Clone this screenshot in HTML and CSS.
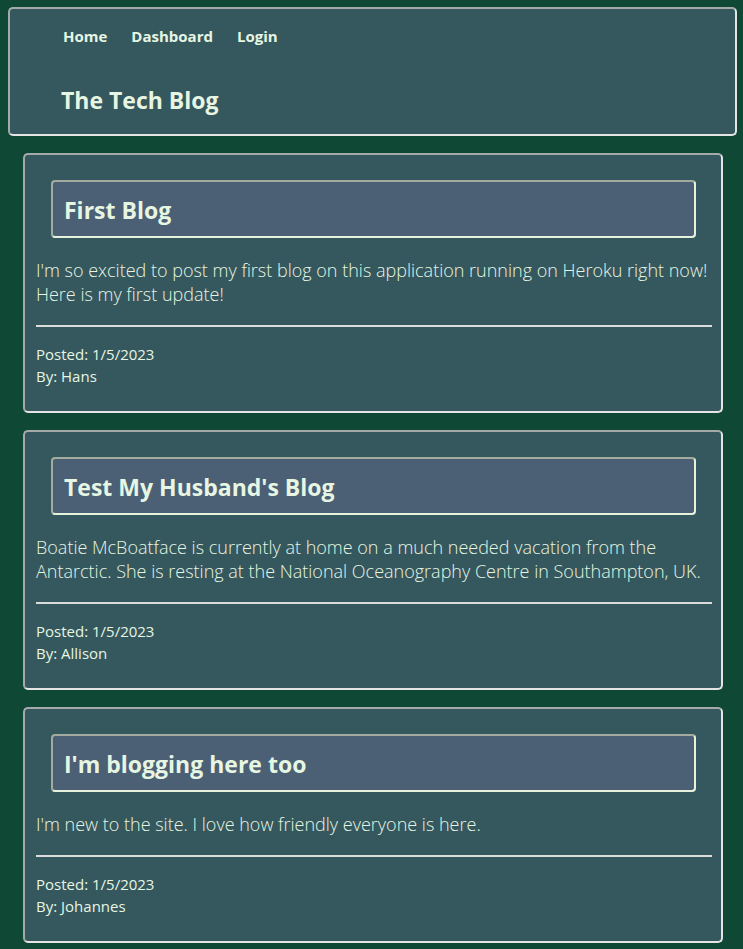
FILE: index.html
```html
<!DOCTYPE html>
<html>
<head>
<meta charset="utf-8">
<link rel="stylesheet" href="styles.css">
</head>
<body>
<header class="site-header">
  <nav class="nav">
    <a href="#">Home</a>
    <a href="#">Dashboard</a>
    <a href="#">Login</a>
  </nav>
  <h1 class="site-title">The Tech Blog</h1>
</header>
<main class="posts">
  <article class="card">
    <h2 class="card-title">First Blog</h2>
    <p class="card-body">I'm so excited to post my first blog on this application running on Heroku right now! Here is my first update!</p>
    <hr class="rule">
    <div class="meta">
      <div>Posted: 1/5/2023</div>
      <div>By: Hans</div>
    </div>
  </article>
  <article class="card">
    <h2 class="card-title">Test My Husband's Blog</h2>
    <p class="card-body">Boatie McBoatface is currently at home on a much needed vacation from the Antarctic. She is resting at the National Oceanography Centre in Southampton, UK.</p>
    <hr class="rule">
    <div class="meta">
      <div>Posted: 1/5/2023</div>
      <div>By: Allison</div>
    </div>
  </article>
  <article class="card">
    <h2 class="card-title">I'm blogging here too</h2>
    <p class="card-body">I'm new to the site. I love how friendly everyone is here.</p>
    <hr class="rule">
    <div class="meta">
      <div>Posted: 1/5/2023</div>
      <div>By: Johannes</div>
    </div>
  </article>
</main>
</body>
</html>
```

FILE: styles.css
```css
html, body {
  background: #0f4835;
}
body {
  margin: 7px 6px 8px 8px;
  font-family: "Open Sans", "Noto Sans", sans-serif;
  color: #e6f6e2;
}
.site-header {
  background: #35575e;
  border: 2px solid;
  border-color: #a4a9a9 #e4e4e4 #e4e4e4 #a4a9a9;
  border-radius: 5px;
  padding: 17px 0 19px 51px;
}
.nav {
  display: flex;
  gap: 24px;
  padding-left: 2px;
}
.nav a {
  color: #e6f6e2;
  text-decoration: none;
  font-weight: 700;
  font-size: 15px;
  line-height: 20px;
}
.site-title {
  margin: 39px 0 0;
  font-size: 23px;
  line-height: 30px;
  font-weight: 700;
}
.posts {
  display: flex;
  flex-direction: column;
  gap: 17px;
  margin: 17px 14px 0 15px;
}
.card {
  background: #35575e;
  border: 2px solid;
  border-color: #a4a9a9 #e4e4e4 #e4e4e4 #a4a9a9;
  border-radius: 5px;
  padding: 25px 9px 24px 11px;
}
.card-title {
  margin: 0 16px 0 15px;
  background: #4b6075;
  border: 2px solid;
  border-color: #a2ab9e #e6f2dc #e6f2dc #a2ab9e;
  border-radius: 4px;
  padding: 13px 11px 11px;
  font-size: 23px;
  line-height: 30px;
  font-weight: 700;
}
.card-body {
  margin: 20px 0 0;
  font-size: 18px;
  line-height: 24px;
  font-weight: 300;
}
.rule {
  margin: 19px 0 0;
  border: 0;
  border-top: 2px solid #dcdcdc;
}
.meta {
  margin-top: 16px;
  font-size: 15px;
  line-height: 22px;
}
```
